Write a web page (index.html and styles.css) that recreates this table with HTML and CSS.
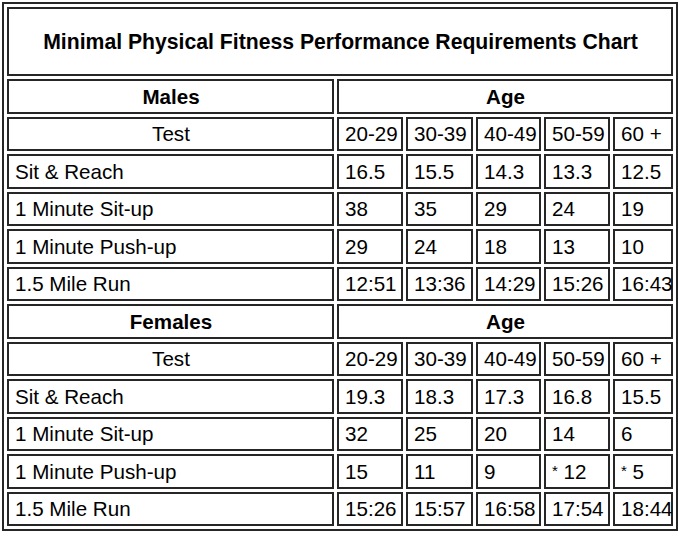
FILE: index.html
```html
<!DOCTYPE html>
<html>
<head>
<meta charset="utf-8">
<title>Minimal Physical Fitness Performance Requirements Chart</title>
<link rel="stylesheet" href="styles.css">
</head>
<body>
<table class="chart">
  <colgroup>
    <col class="c-test">
    <col class="c-a1">
    <col class="c-a2">
    <col class="c-a3">
    <col class="c-a4">
    <col class="c-a5">
  </colgroup>
  <tr class="title-row"><td colspan="6" class="title">Minimal Physical Fitness Performance Requirements Chart</td></tr>
  <tr><td class="head">Males</td><td colspan="5" class="head">Age</td></tr>
  <tr><td class="center">Test</td><td>20-29</td><td>30-39</td><td>40-49</td><td>50-59</td><td>60 +</td></tr>
  <tr><td>Sit &amp; Reach</td><td>16.5</td><td>15.5</td><td>14.3</td><td>13.3</td><td>12.5</td></tr>
  <tr><td>1 Minute Sit-up</td><td>38</td><td>35</td><td>29</td><td>24</td><td>19</td></tr>
  <tr><td>1 Minute Push-up</td><td>29</td><td>24</td><td>18</td><td>13</td><td>10</td></tr>
  <tr><td>1.5 Mile Run</td><td>12:51</td><td>13:36</td><td>14:29</td><td>15:26</td><td>16:43</td></tr>
  <tr><td class="head">Females</td><td colspan="5" class="head">Age</td></tr>
  <tr><td class="center">Test</td><td>20-29</td><td>30-39</td><td>40-49</td><td>50-59</td><td>60 +</td></tr>
  <tr><td>Sit &amp; Reach</td><td>19.3</td><td>18.3</td><td>17.3</td><td>16.8</td><td>15.5</td></tr>
  <tr><td>1 Minute Sit-up</td><td>32</td><td>25</td><td>20</td><td>14</td><td>6</td></tr>
  <tr><td>1 Minute Push-up</td><td>15</td><td>11</td><td>9</td><td><span class="ast">*</span> 12</td><td><span class="ast">*</span> 5</td></tr>
  <tr><td>1.5 Mile Run</td><td>15:26</td><td>15:57</td><td>16:58</td><td>17:54</td><td>18:44</td></tr>
</table>
</body>
</html>
```

FILE: styles.css
```css
html, body {
  background: #ffffff;
}
body {
  margin: 2px;
  font-family: "Liberation Sans", Arial, sans-serif;
  color: #000;
}
.chart {
  table-layout: fixed;
  border-collapse: separate;
  border-spacing: 3px;
  border: 2px solid #262626;
  width: 676px;
}
.c-test { width: 327px; }
.c-a1 { width: 66px; }
.c-a2 { width: 67px; }
.c-a3 { width: 65px; }
.c-a4 { width: 66px; }
.c-a5 { width: 60px; }
.chart td {
  box-sizing: border-box;
  border: 2px solid #262626;
  height: 34.5px;
  padding: 1px 5px 0 6px;
  font-size: 20.6px;
  line-height: 22px;
  white-space: nowrap;
  vertical-align: middle;
  text-align: left;
}
.chart td.title {
  height: 69px;
  text-align: center;
  font-weight: bold;
  font-size: 21.2px;
}
.chart td.head {
  text-align: center;
  font-weight: bold;
}
.chart td.center {
  text-align: center;
}
.ast {
  font-size: 15px;
  vertical-align: 3px;
}
```
